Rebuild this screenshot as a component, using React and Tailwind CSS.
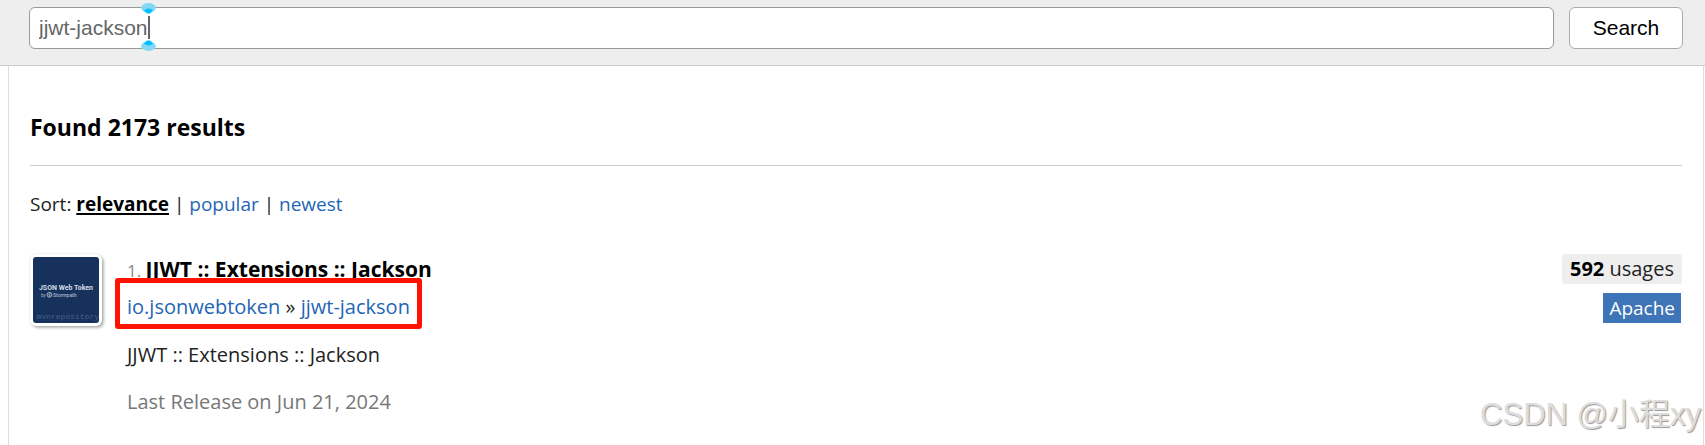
const linkClass = "text-[#1f66b5] hover:underline";

function CaretHandle({ flipped }) {
  return (
    <svg
      width="15"
      height="11"
      viewBox="0 0 15 11"
      className={flipped ? "rotate-180" : ""}
      aria-hidden="true"
    >
      <ellipse cx="7.5" cy="4.8" rx="7.3" ry="4.8" fill="#82d8f5" />
      <path d="M3 7.5 Q7.5 3.5 12 7.5 L9 10.6 H6 Z" fill="#00bfff" />
    </svg>
  );
}

function SearchBar() {
  return (
    <form
      className="flex h-[66px] items-start gap-[15px] border-b border-[#ccc] bg-[#eee] pt-[7px] pr-[22px] pl-[29px] font-['Liberation_Sans',sans-serif] text-[21px]"
      onSubmit={(e) => e.preventDefault()}
    >
      <div className="relative flex-1">
        <input
          type="text"
          aria-label="Search"
          defaultValue="jjwt-jackson"
          className="block h-[42px] w-full rounded-md border border-[#999] bg-white px-[9px] text-[#666] outline-none"
        />
        <div className="pointer-events-none absolute -top-1 left-[112px] flex h-12 flex-col items-center justify-between">
          <CaretHandle />
          <div className="h-[23px] w-[2px] bg-[#666]" />
          <CaretHandle flipped />
        </div>
      </div>
      <button
        type="submit"
        className="h-[42px] w-[114px] rounded-md border border-[#aaa] bg-white text-black"
      >
        Search
      </button>
    </form>
  );
}

function Thumbnail() {
  return (
    <div className="h-[72px] w-[72px] shrink-0 rounded-md bg-white p-[3px] shadow-[2px_2px_3px_0px_rgba(0,0,0,0.28),0_0_2px_rgba(0,0,0,0.15)]">
      <svg viewBox="0 0 66 66" className="block h-full w-full rounded-[3px]" aria-hidden="true">
        <rect width="66" height="66" fill="#16315b" />
        <text x="33" y="33" textAnchor="middle" fontSize="7" fontWeight="700" fill="#d5dce6" fontFamily="Roboto, sans-serif">
          JSON Web Token
        </text>
        <text x="8" y="39.5" fontSize="4.5" fill="#a9b5c8" fontFamily="Roboto, sans-serif">
          by
        </text>
        <circle cx="16.5" cy="37.8" r="2.4" fill="none" stroke="#c3ccd9" strokeWidth="0.8" />
        <path d="M17.3 35.8 L15.5 38 H17.5 L15.9 40" fill="none" stroke="#c3ccd9" strokeWidth="0.7" />
        <text x="20" y="39.5" fontSize="5" fontWeight="500" fill="#a9b5c8" fontFamily="Roboto, sans-serif">
          Stormpath
        </text>
        <text x="66" y="62" textAnchor="end" fontSize="8" fill="#46608a" fontFamily="Liberation Mono, monospace">
          mvnrepository
        </text>
      </svg>
    </div>
  );
}

function Result() {
  return (
    <article className="mt-[35px] flex items-start text-xl">
      <Thumbnail />
      <div className="ml-[25px] flex-1">
        <h2 className="text-[21px] leading-[30px] font-bold text-black">
          <span className="text-[17px] font-normal text-[#888]">1. </span>
          <a href="#artifact">JJWT :: Extensions :: Jackson</a>
        </h2>
        <p className="relative mt-[6px] w-fit leading-[30px]">
          <a href="#group" className={linkClass}>io.jsonwebtoken</a>
          {" » "}
          <a href="#artifact" className={linkClass}>jjwt-jackson</a>
          <span className="pointer-events-none absolute -inset-x-3 -top-[14px] h-[51px] rounded-[3px] border-[5px] border-[#ff1200]" />
        </p>
        <p className="mt-[18px] leading-[30px]">JJWT :: Extensions :: Jackson</p>
        <p className="mt-[17px] leading-[30px] text-[#777]">Last Release on Jun 21, 2024</p>
      </div>
      <div className="flex flex-col items-end gap-[9px] leading-[30px]">
        <a href="#usages" className="rounded-[3px] bg-[#eee] px-2">
          <b className="text-black">592</b> usages
        </a>
        <span className="mr-px bg-[#3e74b8] px-[6px] text-[19px] font-medium text-white">Apache</span>
      </div>
    </article>
  );
}

export default function App() {
  return (
    <div className="relative flex min-h-screen flex-col bg-white font-['Open_Sans',sans-serif] text-[19px] text-[#222]">
      <SearchBar />
      <main className="mr-px ml-2 flex-1 border-x border-[#ddd] px-[21px]">
        <h1 className="border-b border-[#ccc] pt-[46px] pb-[22px] text-[23px] leading-[31px] font-bold text-black">
          Found 2173 results
        </h1>
        <nav className="mt-[23px] leading-[30px]">
          Sort: <a href="#relevance" className="font-bold text-black underline decoration-2 underline-offset-2">relevance</a>
          {" | "}
          <a href="#popular" className={linkClass}>popular</a>
          {" | "}
          <a href="#newest" className={linkClass}>newest</a>
        </nav>
        <Result />
      </main>
      <div className="pointer-events-none absolute right-1 bottom-2 font-['Liberation_Sans','Noto_Sans_CJK_SC',sans-serif] text-[31px] leading-[44px] text-[#ddd] [text-shadow:1px_1px_1px_#999]">
        CSDN @小程xy
      </div>
    </div>
  );
}
